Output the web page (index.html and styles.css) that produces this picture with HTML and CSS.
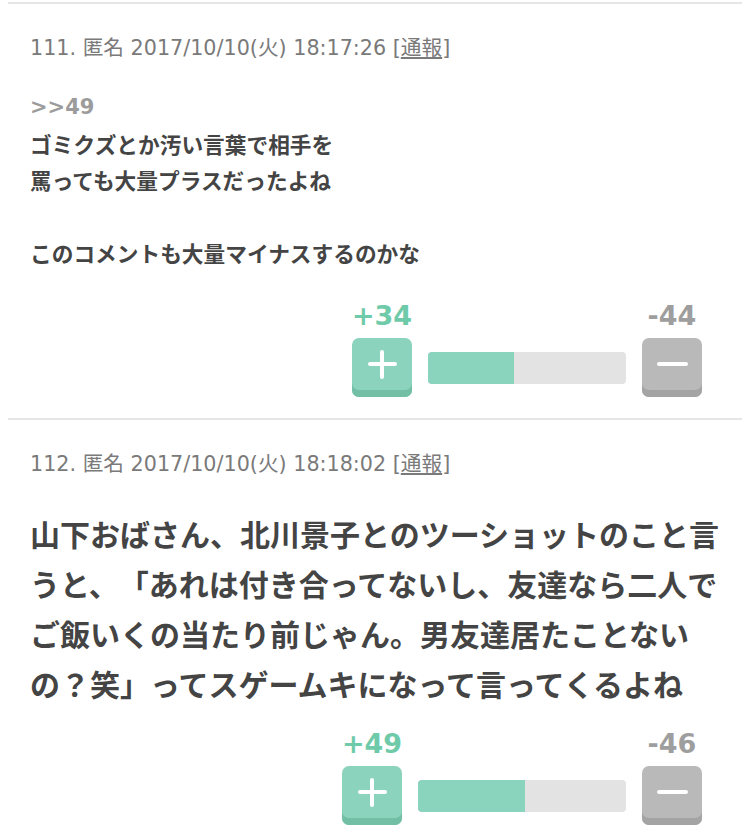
FILE: index.html
```html
<!DOCTYPE html>
<html lang="ja">
<head>
<meta charset="utf-8">
<link rel="stylesheet" href="styles.css">
</head>
<body>
<div class="page">
  <article class="comment">
    <div class="meta">111. 匿名 2017/10/10(火) 18:17:26 [<span class="report">通報</span>]</div>
    <div class="body body--sm">
      <div class="anchor">&gt;&gt;49</div>
      <div>ゴミクズとか汚い言葉で相手を</div>
      <div>罵っても大量プラスだったよね</div>
      <div class="blank">&nbsp;</div>
      <div>このコメントも大量マイナスするのかな</div>
    </div>
    <div class="votes votes--sm">
      <div class="vote">
        <div class="count count--plus">+34</div>
        <div class="btn btn--plus"><span class="icon-plus"></span></div>
      </div>
      <div class="bar"><div class="bar-fill" style="width:43.6%"></div></div>
      <div class="vote">
        <div class="count count--minus">-44</div>
        <div class="btn btn--minus"><span class="icon-minus"></span></div>
      </div>
    </div>
  </article>
  <article class="comment">
    <div class="meta">112. 匿名 2017/10/10(火) 18:18:02 [<span class="report">通報</span>]</div>
    <div class="body body--lg">
      <div>山下おばさん、北川景子とのツーショットのこと言うと、「あれは付き合ってないし、友達なら二人でご飯いくの当たり前じゃん。男友達居たことないの？笑」ってスゲームキになって言ってくるよね</div>
    </div>
    <div class="votes votes--lg">
      <div class="vote">
        <div class="count count--plus">+49</div>
        <div class="btn btn--plus"><span class="icon-plus"></span></div>
      </div>
      <div class="bar"><div class="bar-fill" style="width:51.6%"></div></div>
      <div class="vote">
        <div class="count count--minus">-46</div>
        <div class="btn btn--minus"><span class="icon-minus"></span></div>
      </div>
    </div>
  </article>
</div>
</body>
</html>
```

FILE: styles.css
```css
html, body {
  margin: 0;
  padding: 0;
  background: #ffffff;
}

.page {
  padding-top: 2px;
}

.comment {
  margin: 0 8px;
  padding: 32px 40px 21px 22px;
  border-top: 2px solid #e6e6e6;
}

.meta {
  font-family: "DejaVu Sans", "Noto Sans CJK JP", sans-serif;
  font-size: 20.7px;
  line-height: 24px;
  color: #7a7a7a;
  white-space: nowrap;
}

.report {
  text-decoration: underline;
  text-underline-offset: 2px;
}

.body {
  font-family: "Noto Sans CJK JP", sans-serif;
  font-weight: 700;
  color: #444444;
  text-spacing-trim: space-all;
}

.body--sm {
  margin-top: 29px;
  font-size: 21.7px;
  line-height: 36.5px;
}

.body--lg {
  margin-top: 32px;
  margin-right: -18px;
  font-size: 30px;
  line-height: 50px;
}

.anchor {
  font-family: "DejaVu Sans", sans-serif;
  font-weight: 700;
  font-size: 21px;
  color: #9c9c9c;
}

.votes {
  display: flex;
  justify-content: flex-end;
  align-items: flex-end;
  gap: 16px;
}

.votes--sm {
  margin-top: 29px;
}

.votes--lg {
  margin-top: 21px;
}

.vote {
  display: flex;
  flex-direction: column;
  align-items: center;
  gap: 7px;
  width: 60px;
}

.count {
  font-family: "DejaVu Sans", sans-serif;
  font-weight: 700;
  font-size: 27px;
  line-height: 30px;
  white-space: nowrap;
}

.count--plus {
  color: #6ecaa9;
}

.count--minus {
  color: #9e9e9e;
}

.btn {
  width: 60px;
  height: 59px;
  border-radius: 7px;
  display: flex;
  align-items: center;
  justify-content: center;
  padding-bottom: 6px;
  box-sizing: border-box;
}

.btn--plus {
  background: #8bd3bd;
  box-shadow: inset 0 -7px 0 #72bfa6;
}

.btn--minus {
  background: #b9b9b9;
  box-shadow: inset 0 -7px 0 #a4a4a4;
}

.icon-plus {
  position: relative;
  width: 29px;
  height: 29px;
}

.icon-plus::before,
.icon-plus::after {
  content: "";
  position: absolute;
  background: #ffffff;
  border-radius: 2px;
}

.icon-plus::before {
  left: 0;
  right: 0;
  top: 12.5px;
  height: 4px;
}

.icon-plus::after {
  top: 0;
  bottom: 0;
  left: 12.5px;
  width: 4px;
}

.icon-minus {
  width: 31px;
  height: 4px;
  background: #ffffff;
  border-radius: 2px;
}

.bar {
  height: 32px;
  margin-bottom: 13px;
  background: #e3e3e3;
  border-radius: 4px;
  overflow: hidden;
}

.votes--sm .bar {
  width: 198px;
}

.votes--lg .bar {
  width: 208px;
}

.bar-fill {
  height: 100%;
  background: #8ad4be;
}
```
